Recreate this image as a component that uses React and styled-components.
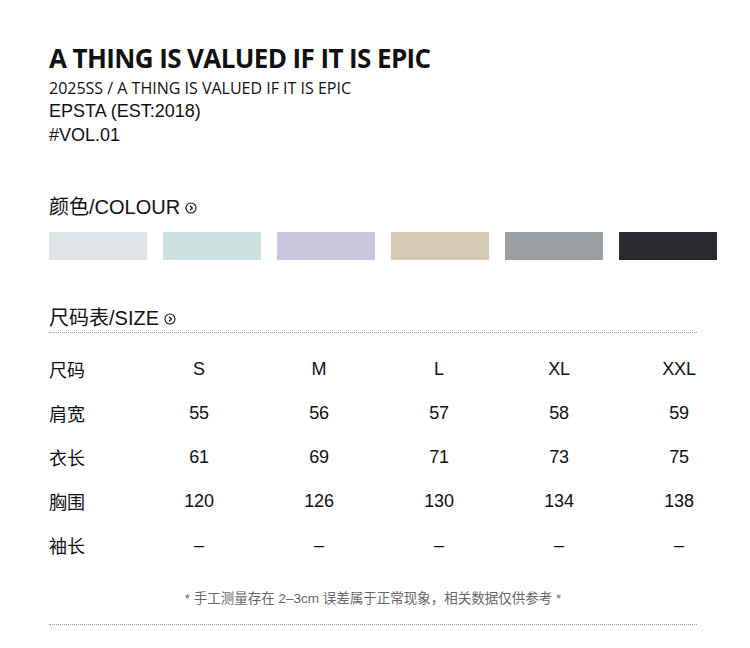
import React from 'react'
import styled, { createGlobalStyle } from 'styled-components'

const GlobalStyle = createGlobalStyle`
  body {
    margin: 0;
    background: #fff;
    font-family: 'Liberation Sans', 'Noto Sans CJK SC', sans-serif;
    color: #111;
  }
`

const colours = ['#e0e4e7', '#cce1e0', '#c7c4dc', '#d4cab6', '#9b9ea2', '#2a2a2e']

const sizes = ['S', 'M', 'L', 'XL', 'XXL']

const rows = [
  { label: '肩宽', values: ['55', '56', '57', '58', '59'] },
  { label: '衣长', values: ['61', '69', '71', '73', '75'] },
  { label: '胸围', values: ['120', '126', '130', '134', '138'] },
  { label: '袖长', values: ['–', '–', '–', '–', '–'] },
]

const CircleArrow = () => (
  <svg width="12" height="12" viewBox="0 0 12 12">
    <circle cx="6" cy="6" r="5" fill="none" stroke="#111" strokeWidth="1.1" />
    <path d="M4.9 3.6 L7.3 6 L4.9 8.4" fill="none" stroke="#111" strokeWidth="1.3" />
  </svg>
)

const App = () => {
  return (
    <>
      <GlobalStyle />
      <Page>
        <Intro>
          <Title>A THING IS VALUED IF IT IS EPIC</Title>
          <Season>2025SS / A THING IS VALUED IF IT IS EPIC</Season>
          <Meta>EPSTA (EST:2018)</Meta>
          <Meta>#VOL.01</Meta>
        </Intro>

        <SectionHead>
          颜色/COLOUR <CircleArrow />
        </SectionHead>
        <Swatches>
          {colours.map((c) => (
            <Swatch key={c} $color={c} />
          ))}
        </Swatches>

        <SectionHead $tight>
          尺码表/SIZE <CircleArrow />
        </SectionHead>
        <Dotted />

        <SizeTable>
          <Label>尺码</Label>
          {sizes.map((s) => (
            <Cell key={s}>{s}</Cell>
          ))}
          {rows.map((r) => (
            <React.Fragment key={r.label}>
              <Label>{r.label}</Label>
              {r.values.map((v, i) => (
                <Cell key={i}>{v}</Cell>
              ))}
            </React.Fragment>
          ))}
        </SizeTable>

        <Note>* 手工测量存在 2–3cm 误差属于正常现象，相关数据仅供参考 *</Note>
        <Dotted />
      </Page>
    </>
  )
}

const Page = styled.div`
  width: 750px;
  padding: 42px 0 0 49px;
  box-sizing: border-box;
`

const Intro = styled.header`
  display: flex;
  flex-direction: column;
`

const Title = styled.h1`
  margin: 0 0 3px;
  font-family: 'Open Sans', sans-serif;
  font-weight: 700;
  font-size: 26px;
  line-height: 32px;
  letter-spacing: -0.6px;
  color: #111;
`

const Season = styled.div`
  font-family: 'Open Sans', sans-serif;
  font-size: 16px;
  line-height: 22px;
  color: #111;
`

const Meta = styled.div`
  font-family: 'Liberation Sans', sans-serif;
  font-size: 18px;
  line-height: 24px;
  color: #111;
`

const SectionHead = styled.h2`
  display: flex;
  align-items: center;
  gap: 5px;
  margin: ${({ $tight }) => ($tight ? '46px 0 2px' : '48px 0 13px')};
  font-family: 'Liberation Sans', 'Noto Sans CJK SC', sans-serif;
  font-weight: 400;
  font-size: 20px;
  line-height: 24px;
  color: #111;

  svg {
    margin-top: 2px;
  }
`

const Swatches = styled.div`
  display: flex;
  gap: 16px;
`

const Swatch = styled.div`
  width: 98px;
  height: 28px;
  background: ${({ $color }) => $color};
`

const Dotted = styled.div`
  width: 648px;
  border-top: 1px dotted #9a9a9a;
`

const SizeTable = styled.div`
  display: grid;
  grid-template-columns: 90px repeat(5, 120px);
  grid-auto-rows: 44px;
  align-items: center;
  margin-top: 14px;
`

const Label = styled.div`
  font-family: 'Liberation Sans', 'Noto Sans CJK SC', sans-serif;
  font-size: 18px;
`

const Cell = styled.div`
  text-align: center;
  font-family: 'Liberation Sans', sans-serif;
  font-size: 18px;
  letter-spacing: -0.2px;
`

const Note = styled.p`
  width: 648px;
  margin: 24px 0 17px;
  line-height: 16px;
  text-align: center;
  font-family: 'Liberation Sans', 'Noto Sans CJK SC', sans-serif;
  font-size: 13.5px;
  color: #666;
`

export default App
